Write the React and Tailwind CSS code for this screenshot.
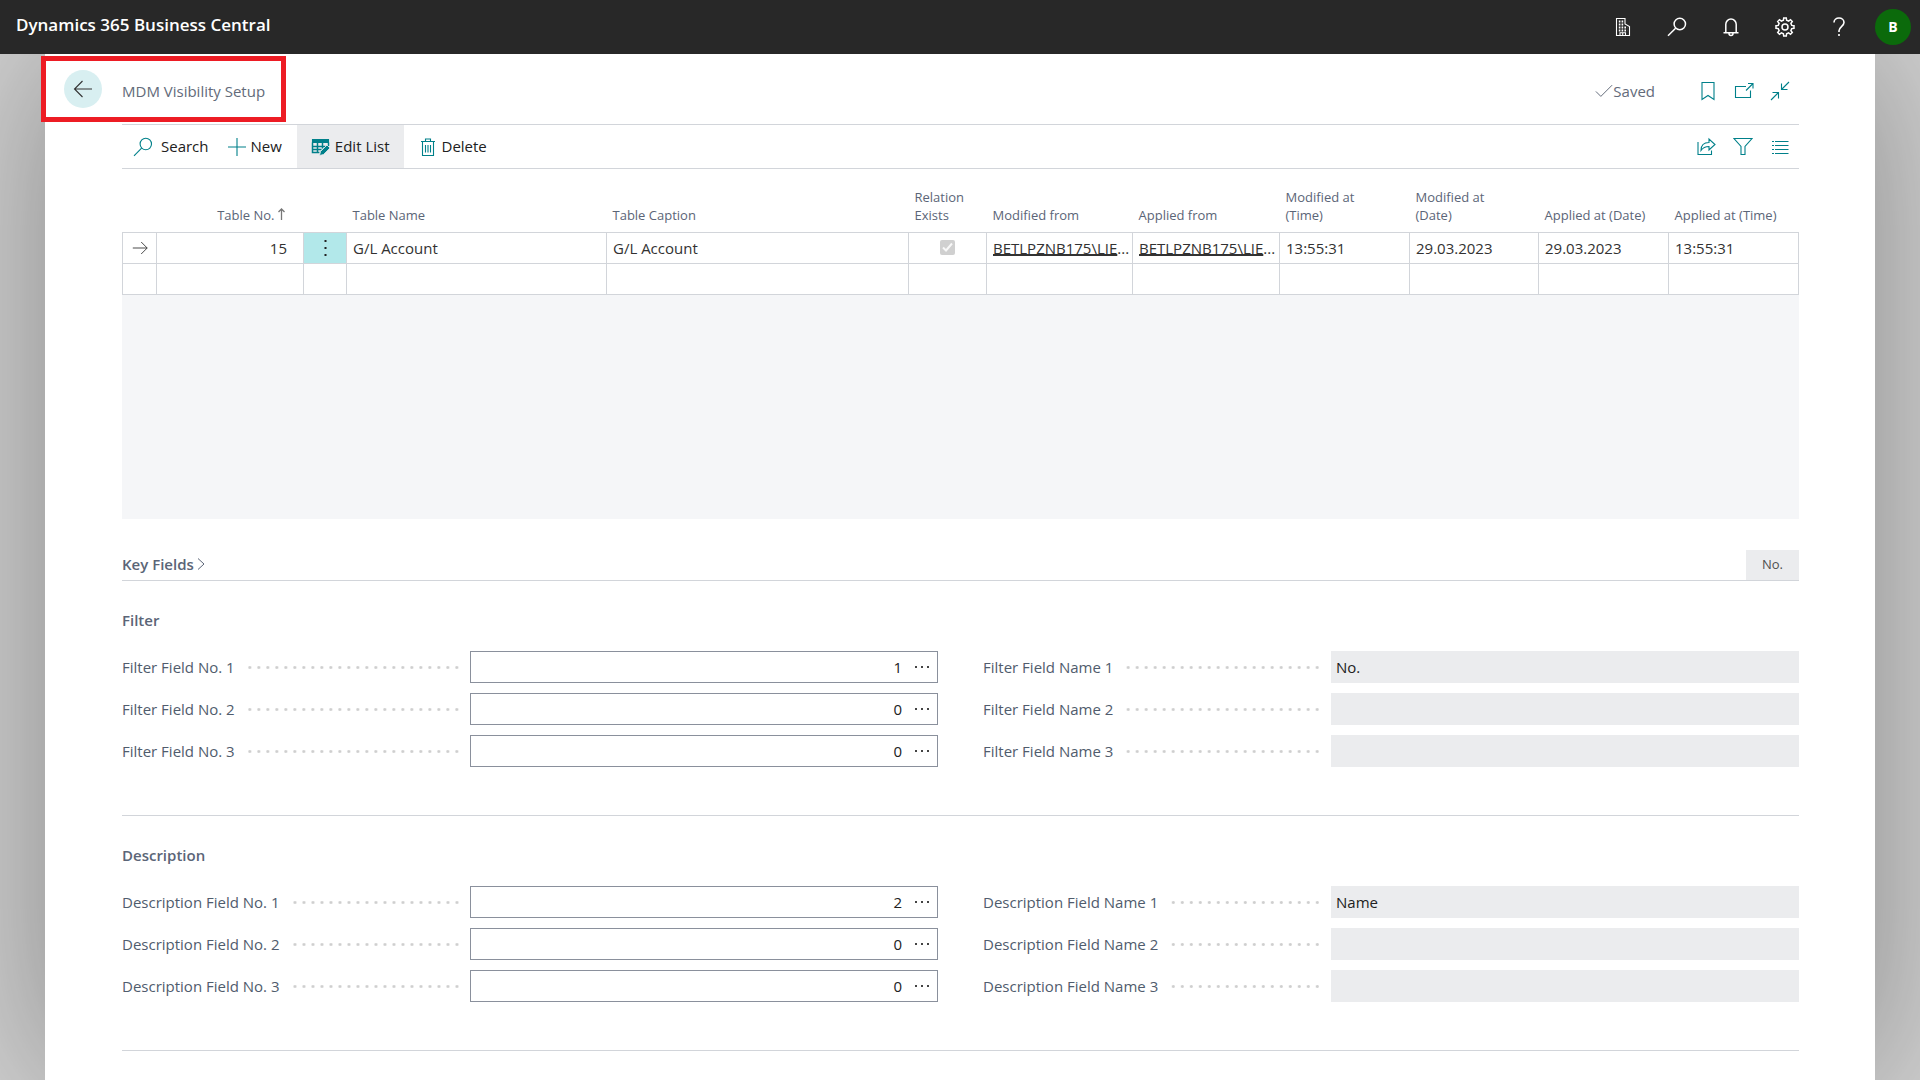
const tableColumns = [
  { label: '', width: 'w-[34px]' },
  { label: 'Table No.', width: 'w-[147px]', sorted: true },
  { label: '', width: 'w-[43px]' },
  { label: 'Table Name', width: 'w-[260px]' },
  { label: 'Table Caption' },
  { label: 'Relation Exists', width: 'w-[78px]' },
  { label: 'Modified from', width: 'w-[146px]' },
  { label: 'Applied from', width: 'w-[147px]' },
  { label: 'Modified at (Time)', width: 'w-[130px]', wrap: true },
  { label: 'Modified at (Date)', width: 'w-[129px]', wrap: true },
  { label: 'Applied at (Date)', width: 'w-[130px]' },
  { label: 'Applied at (Time)', width: 'w-[130px]' },
];

const filterFields = [
  { id: 1, number: '1', name: 'No.' },
  { id: 2, number: '0', name: '' },
  { id: 3, number: '0', name: '' },
];

const descriptionFields = [
  { id: 1, number: '2', name: 'Name' },
  { id: 2, number: '0', name: '' },
  { id: 3, number: '0', name: '' },
];

const Icon = ({ className = 'w-5 h-5', strokeWidth = 1.1, children }) => (
  <svg
    className={`${className} shrink-0`}
    viewBox="0 0 20 20"
    fill="none"
    stroke="currentColor"
    strokeWidth={strokeWidth}
    aria-hidden="true"
  >
    {children}
  </svg>
);

const SearchIcon = (props) => (
  <Icon {...props}>
    <circle cx="12.8" cy="7" r="5.7" />
    <path d="M8.6 11.2L1 18.8" />
  </Icon>
);

const HeaderButton = ({ label, children }) => (
  <button type="button" aria-label={label} className="flex h-[54px] w-[54px] items-center justify-center">
    {children}
  </button>
);

const TopBar = () => (
  <header className="flex h-[54px] items-center justify-between bg-[#282828] pl-4 pr-[9px] text-white">
    <a href="#home" className="pb-1 text-[17px] font-semibold">Dynamics 365 Business Central</a>
    <div className="flex items-center">
      <HeaderButton label="Company">
        <Icon>
          <path d="M3.5 18.5v-17H12V7l4.5 2.5v9z" />
          <path d="M5.8 4.5h4.5M5.8 7.5h4.5M5.8 10.5h8.5M5.8 13.5h8.5" strokeWidth="1.8" strokeDasharray="1.6 1.2" />
          <path d="M7 18.5v-2.7h5.500v2.700M9.700 16v2.500" />
        </Icon>
      </HeaderButton>
      <HeaderButton label="Search">
        <SearchIcon strokeWidth={1.5} />
      </HeaderButton>
      <HeaderButton label="Notifications">
        <Icon strokeWidth={1.5}>
          <path d="M2.5 15.8h15M4.8 15.8V7.3a5.2 5.2 0 0 1 10.4 0v8.5M8 16.5a2 2 0 0 0 4 0" />
        </Icon>
      </HeaderButton>
      <HeaderButton label="Settings">
        <Icon strokeWidth={1.5}>
          <path d="M8.4 3.3l.3-2.3h2.6l.3 2.3 2 .8 1.9-1.4 1.8 1.8-1.4 1.9.8 2 2.3.3v2.6l-2.3.3-.8 2 1.4 1.9-1.8 1.8-1.9-1.4-2 .8-.3 2.3H8.7l-.3-2.3-2-.8-1.9 1.4-1.8-1.8 1.4-1.9-.8-2L1 11.3V8.700l2.300-.3.8-2-1.400-1.900 1.800-1.800 1.900 1.400z" />
          <circle cx="10" cy="10" r="3" />
        </Icon>
      </HeaderButton>
      <HeaderButton label="Help">
        <Icon strokeWidth={1.6}>
          <path d="M5 5.500C5 2.800 7.200 1 10 1s5 1.800 5 4.500c0 3.700-5 4.500-5 8.200v1.300M10 17v2" />
        </Icon>
      </HeaderButton>
      <button
        type="button"
        aria-label="Account"
        className="ml-[9px] h-9 w-9 rounded-full bg-[#0b6a0b] text-sm font-bold"
      >
        B
      </button>
    </div>
  </header>
);

const PageHeader = () => (
  <div className="flex h-[70px] items-start justify-between pr-[85px]">
    <div className="-ml-1 mt-[2px] flex h-[66px] items-center border-[5px] border-[#ed1c24] pl-[18px] pr-4">
      <button
        type="button"
        aria-label="Back"
        className="flex h-[38px] w-[38px] items-center justify-center rounded-full bg-[#d8eff1] text-[#323232]"
      >
        <Icon>
          <path d="M19 10H1.5M9.5 2l-8 8 8 8" />
        </Icon>
      </button>
      <h1 className="ml-5 pt-1 text-[15px] text-[#636b7a]">MDM Visibility Setup</h1>
    </div>
    <div className="mt-[25px] flex h-6 items-center text-[#00808a]">
      <span className="mr-[43px] flex items-center text-[15px] text-[#636b7a]">
        <Icon className="w-[18px] h-[18px]">
          <path d="M1 10.5L6.5 16 19 3.5" />
        </Icon>
        Saved
      </span>
      <div className="flex gap-4">
        <button type="button" aria-label="Bookmark">
          <Icon>
            <path d="M4 1.500h12v17l-6-4-6 4z" />
          </Icon>
        </button>
        <button type="button" aria-label="Open in new window">
          <Icon>
            <path d="M12 5.500H1.500v11h15V9.500M12 9.500l6.500-6.500M14 2.500h5v5" />
          </Icon>
        </button>
        <button type="button" aria-label="Collapse">
          <Icon>
            <path d="M19 1l-7.500 7.500M11.500 2.500v6h6M1 19l7.500-7.500M2.500 11.500h6v6" />
          </Icon>
        </button>
      </div>
    </div>
  </div>
);

const ActionButton = ({ icon, label, className = '' }) => (
  <button type="button" className={`flex h-full items-center ${className}`}>
    <span className="text-[#00808a]">{icon}</span>
    {label}
  </button>
);

const Toolbar = () => (
  <div className="flex h-[45px] items-center justify-between border-y border-[#d2d5da] text-[15px] text-[#212121]">
    <div className="flex h-full">
      <ActionButton label="Search" className="gap-2 pl-[11px] pr-[18px]" icon={<SearchIcon />} />
      <ActionButton
        label="New"
        className="gap-1 pr-[15px]"
        icon={
          <Icon>
            <path d="M10 1v18M1 10h18" />
          </Icon>
        }
      />
      <ActionButton
        label="Edit List"
        className="gap-1 bg-[#ebecee] px-[14px]"
        icon={
          <Icon>
            <path d="M1.5 2.5h16v3h-16z" fill="currentColor" />
            <path d="M1.5 5.500v10h7M1.500 9.500h13M1.500 12.500h9M6.500 6v9.500M11.500 6v5.500M17.500 5.500V9" strokeWidth="1.500" />
            <path d="M8.500 18.500l1-4L16 8l3 3-6.500 6.500z" fill="currentColor" stroke="#ebecee" strokeWidth=".8" />
          </Icon>
        }
      />
      <ActionButton
        label="Delete"
        className="gap-1 px-[14px]"
        icon={
          <Icon>
            <path d="M3 4.500h14M7.500 4.500V2h5v2.500M4.500 4.500v14h11v-14M7.500 8v7.500M10 8v7.500M12.500 8v7.500" />
          </Icon>
        }
      />
    </div>
    <div className="flex gap-[17px] pb-[2px] pr-[9px] text-[#00808a]">
      <button type="button" aria-label="Share">
        <Icon>
          <path d="M2 6v12.500h13.500v-4M5 14.500c0-5 3-8 8-8V3l6 5.500-6 5.500v-3.500c-3.500 0-6 1-8 4z" />
        </Icon>
      </button>
      <button type="button" aria-label="Filter">
        <Icon>
          <path d="M1 2.500h18l-7 8v8H8v-8z" />
        </Icon>
      </button>
      <button type="button" aria-label="List view">
        <Icon>
          <path d="M5 5.500h13.500M5 9.500h13.500M5 13.500h13.500M5 17.500h13.500M2 5.500h2M2 9.500h2M2 13.500h2M2 17.500h2" />
        </Icon>
      </button>
    </div>
  </div>
);

const cell = 'border border-[#d2d5da] px-[6px] pt-[2px] truncate';
const userCell = 'border border-[#d2d5da] pl-[6px] pt-[2px] whitespace-nowrap overflow-hidden';

const UserLink = () => (
  <>
    <a href="#user" className="underline decoration-2 underline-offset-0">BETLPZNB175\LIE</a>...
  </>
);

const SetupTable = () => (
  <div className="min-h-[350px] bg-[#f5f6f8]">
    <table className="w-full table-fixed border-collapse bg-white text-left">
      <thead>
        <tr className="h-[63px] align-bottom text-[13px] leading-[18px] text-[#5b6577]">
          {tableColumns.map((col, i) => (
            <th
              key={i}
              scope="col"
              className={`${col.width ?? ''} ${col.wrap ? 'pr-6' : 'pr-[6px]'} pb-2 pl-[6px] font-normal`}
            >
              {col.sorted ? (
                <span className="flex items-end justify-end gap-[3px] pr-[13px]">
                  {col.label}
                  <svg className="mb-1 h-3 w-[7px]" viewBox="0 0 7 12" fill="none" stroke="#777" strokeWidth="1.3">
                    <path d="M3.5 12V1M.5 4l3-3 3 3" />
                  </svg>
                </span>
              ) : (
                col.label
              )}
            </th>
          ))}
        </tr>
      </thead>
      <tbody className="text-[15px] text-[#323232]">
        <tr className="h-[31px]">
          <td className="border border-[#d2d5da]">
            <Icon className="mx-auto h-4 w-4">
              <path d="M1 10h18M11.5 2.5L19 10l-7.500 7.500" />
            </Icon>
          </td>
          <td className="border border-[#d2d5da] pr-4 pt-[2px] text-right">15</td>
          <td className="border border-[#d2d5da] bg-[#b2e8ea] p-0">
            <button type="button" aria-label="Row options" className="flex w-full justify-center">
              <svg className="h-4 w-[3px]" viewBox="0 0 3 16" fill="#212121">
                <path d="M.5 0h2v2h-2zM.5 7h2v2h-2zM.5 14h2v2h-2z" />
              </svg>
            </button>
          </td>
          <td className={cell}>G/L Account</td>
          <td className={cell}>G/L Account</td>
          <td className="border border-[#d2d5da]">
            <label className="relative mx-auto flex h-[15px] w-[15px]">
              <input
                type="checkbox"
                aria-label="Relation Exists"
                defaultChecked
                disabled
                className="h-[15px] w-[15px] appearance-none rounded-[2px] bg-[#d0d0d0]"
              />
              <svg className="absolute inset-0" viewBox="0 0 15 15" fill="none" stroke="#f8f8f8" strokeWidth="2">
                <path d="M3 7.5l3 3 6-7" />
              </svg>
            </label>
          </td>
          <td className={userCell}><UserLink /></td>
          <td className={userCell}><UserLink /></td>
          <td className={cell}>13:55:31</td>
          <td className={cell}>29.03.2023</td>
          <td className={cell}>29.03.2023</td>
          <td className={cell}>13:55:31</td>
        </tr>
        <tr className="h-[31px]">
          {tableColumns.map((_, i) => (
            <td key={i} className={cell} />
          ))}
        </tr>
      </tbody>
    </table>
  </div>
);

const KeyFields = () => (
  <div className="mt-[31px] flex items-stretch justify-between border-b border-[#d2d5da]">
    <button type="button" className="flex items-center gap-[3px] pb-[2px] text-[15px] font-semibold text-[#5b6577]">
      Key Fields
      <svg className="h-3 w-2" viewBox="0 0 8 12" fill="none" stroke="currentColor">
        <path d="M1 .5L7 6l-6 5.500" />
      </svg>
    </button>
    <span className="flex h-[30px] w-[53px] items-center justify-center bg-[#ebecee] text-[13px] text-[#505050]">No.</span>
  </div>
);

const FieldLabel = ({ htmlFor, children }) => (
  <label htmlFor={htmlFor} className="flex min-w-0 flex-1 items-center text-[15px] text-[#505c6d]">
    <span className="shrink-0">{children}</span>
    <span className="ml-3 mr-[9px] h-[3px] flex-1 bg-[radial-gradient(circle,#cfcfcf_1px,transparent_2px)] bg-[length:9px_3px] bg-right bg-repeat-x" />
  </label>
);

const FieldGroup = ({ title, fields }) => (
  <section className="border-b border-[#d2d5da] pb-12 pt-[27px]">
    <h2 className="mb-[19px] text-[15px] font-semibold leading-6 text-[#5b6577]">{title}</h2>
    <div className="grid grid-cols-2 gap-x-[45px] gap-y-[10px]">
      {fields.map(({ id, number, name }) => {
        const key = `${title.toLowerCase()}-${id}`;
        return [
          <div key={`${key}-no`} className="flex h-8">
            <FieldLabel htmlFor={`${key}-no`}>{`${title} Field No. ${id}`}</FieldLabel>
            <div className="flex w-[468px] items-center border border-[#8a909c] bg-white">
              <input
                id={`${key}-no`}
                type="text"
                defaultValue={number}
                className="h-full min-w-0 flex-1 text-right text-[15px] text-[#212121] outline-none"
              />
              <button type="button" aria-label="Look up" className="flex h-full w-[35px] items-center justify-end pr-2">
                <svg className="h-[2px] w-[14px]" viewBox="0 0 14 2" fill="#444">
                  <path d="M0 0h2v2H0zM6 0h2v2H6zM12 0h2v2h-2z" />
                </svg>
              </button>
            </div>
          </div>,
          <div key={`${key}-name`} className="flex h-8">
            <FieldLabel htmlFor={`${key}-name`}>{`${title} Field Name ${id}`}</FieldLabel>
            <input
              id={`${key}-name`}
              type="text"
              readOnly
              value={name}
              className="w-[468px] bg-[#ebecee] px-[5px] text-[15px] text-[#212121] outline-none"
            />
          </div>,
        ];
      })}
    </div>
  </section>
);

export default function App() {
  return (
    <div className="flex h-screen flex-col overflow-hidden font-['Open_Sans','Noto_Sans',sans-serif]">
      <TopBar />
      <div className="min-h-0 flex-1 overflow-hidden bg-[#d0d0d0] px-[45px]">
        <main className="h-full bg-white shadow-[0_0_150px_rgba(0,0,0,0.34)]">
          <PageHeader />
          <div className="pl-[77px] pr-[76px]">
            <Toolbar />
            <SetupTable />
            <KeyFields />
            <FieldGroup title="Filter" fields={filterFields} />
            <FieldGroup title="Description" fields={descriptionFields} />
          </div>
        </main>
      </div>
    </div>
  );
}
